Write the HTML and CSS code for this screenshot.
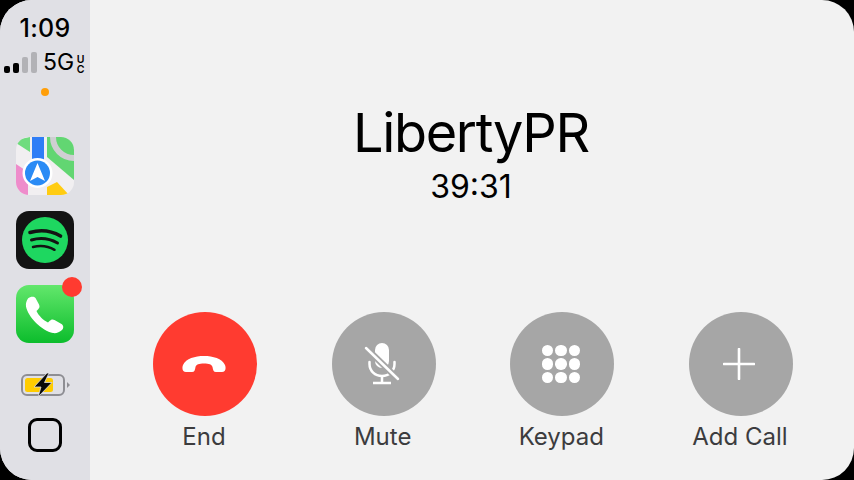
FILE: index.html
```html
<!DOCTYPE html>
<html lang="en">
<head>
    <meta charset="UTF-8">
    <meta name="viewport" content="width=device-width, initial-scale=1.0">
    <title>CarPlay Call</title>
    <link rel="stylesheet" href="styles.css">
</head>
<body>
    <div class="screen">
        <aside class="sidebar">
            <div class="clock">1:09</div>
            <div class="signal">
                <div class="bars">
                    <span class="bar bar-1"></span>
                    <span class="bar bar-2"></span>
                    <span class="bar bar-3"></span>
                    <span class="bar bar-4"></span>
                </div>
                <span class="net">5G</span>
                <span class="net-uc">UC</span>
            </div>
            <div class="mic-dot"></div>

            <div class="apps">
                <svg class="app" viewBox="0 0 58 58">
                    <defs>
                        <clipPath id="tile"><rect width="58" height="58" rx="13"/></clipPath>
                    </defs>
                    <g clip-path="url(#tile)">
                        <rect width="58" height="58" fill="#f1eff1"/>
                        <path d="M31 0H58V43L31 20Z" fill="#62d672"/>
                        <path d="M0 3L14 0V15L0 6Z" fill="#6fdc7e"/>
                        <path d="M0 27L12 35V58H0Z" fill="#ee8ccb"/>
                        <path d="M31 58V50L41 45L53 58Z" fill="#ffcc12"/>
                        <circle cx="58" cy="0" r="21" fill="none" stroke="#cfcfd2" stroke-width="6"/>
                        <rect x="16" y="0" width="12" height="26" fill="#2f7df6"/>
                        <circle cx="21.5" cy="36" r="15" fill="#fff"/>
                        <circle cx="21.5" cy="36" r="12.5" fill="#2a8bf5"/>
                        <path d="M21.5 26L29 44L21.5 40L14 44Z" fill="#fff"/>
                    </g>
                </svg>
                <svg class="app" viewBox="0 0 58 58">
                    <rect width="58" height="58" rx="13" fill="#131313"/>
                    <circle cx="29" cy="29" r="23" fill="#1ed760"/>
                    <g fill="none" stroke="#131313" stroke-linecap="round">
                        <path d="M14 21.500C24 18.500 35 19.500 44.500 25" stroke-width="3.600"/>
                        <path d="M15.500 29C24 26.500 33.500 27.500 41.500 32" stroke-width="3"/>
                        <path d="M17 36C24 34.300 32 35 38.500 38.800" stroke-width="2.500"/>
                    </g>
                </svg>
                <div class="app-badged">
                    <svg class="app" viewBox="0 0 58 58">
                        <defs>
                            <linearGradient id="phoneGreen" x1="0" y1="0" x2="0" y2="1">
                                <stop offset="0" stop-color="#63e76c"/>
                                <stop offset="1" stop-color="#0cbd2c"/>
                            </linearGradient>
                        </defs>
                        <rect width="58" height="58" rx="13" fill="url(#phoneGreen)"/>
                        <path d="M12 13.500C14 11.500 18 11 19.500 13L23 19.500C24 21.500 23.500 23 22 24.500L20.500 26C22.500 30.500 27.500 35.500 32 37.500L33.500 36C35 34.500 36.500 34 38.500 35L45.500 39C47.500 40.500 48 43 46 45C43.500 47.500 40 48.500 37 48C26 46 12 32 10 21.500C9.500 18.500 10.500 15.500 12 13.500Z" fill="#fff"/>
                    </svg>
                    <span class="badge"></span>
                </div>
            </div>

            <svg class="battery" viewBox="0 0 50 24">
                <rect x="1" y="2" width="42" height="20" rx="5" fill="none" stroke="#8e8e93" stroke-width="2"/>
                <rect x="4" y="5" width="28" height="14" rx="2.500" fill="#ffcc00"/>
                <path d="M46 9L49 12L46 15Z" fill="#8e8e93"/>
                <path d="M26 0L13 14H20L17 24L31 9.500H23.500L28 0Z" fill="#0a0a0a" stroke="#e0e0e5" stroke-width="0.800"/>
            </svg>
            <div class="home"></div>
        </aside>

        <main class="call">
            <div class="caller">
                <h1 class="caller-name">LibertyPR</h1>
                <div class="caller-time">39:31</div>
            </div>
            <div class="actions">
                <div class="action">
                    <div class="circle circle-end">
                        <svg class="ico-end" viewBox="0 0 44 16">
                            <path d="M1 9C4 2.500 13 0 22 0C31 0 40 2.500 43 9C44.500 13 43 16 40 16L34 16C31.500 16 31 14 30.500 11C30 8.500 27 7.500 22 7.500C17 7.500 14 8.500 13.500 11C13 14 12.500 16 10 16L4 16C1 16 -.5 13 1 9Z" fill="#fff"/>
                        </svg>
                    </div>
                    <span class="action-label">End</span>
                </div>
                <div class="action">
                    <div class="circle">
                        <svg class="ico-mic" viewBox="0 0 38 44">
                            <rect x="11" y="1" width="14" height="25" rx="7" fill="#fff"/>
                            <path d="M5.500 20V22C5.500 29 11 34 18 34C25 34 30.500 29 30.500 22V20" fill="none" stroke="#fff" stroke-width="2.500" stroke-linecap="round"/>
                            <path d="M18 34V41M9 41H27" fill="none" stroke="#fff" stroke-width="2.500"/>
                            <path d="M2 6L34 37" stroke="#a6a6a6" stroke-width="6.500"/>
                            <path d="M2 6L34 37" stroke="#fff" stroke-width="2.500" stroke-linecap="round"/>
                        </svg>
                    </div>
                    <span class="action-label">Mute</span>
                </div>
                <div class="action">
                    <div class="circle">
                        <div class="keypad">
                            <span></span><span></span><span></span>
                            <span></span><span></span><span></span>
                            <span></span><span></span><span></span>
                        </div>
                    </div>
                    <span class="action-label">Keypad</span>
                </div>
                <div class="action">
                    <div class="circle">
                        <svg class="ico-plus" viewBox="0 0 32 32">
                            <path d="M16 1V31M1 16H31" stroke="#fff" stroke-width="2.600" stroke-linecap="round"/>
                        </svg>
                    </div>
                    <span class="action-label">Add Call</span>
                </div>
            </div>
        </main>
    </div>
</body>
</html>
```

FILE: styles.css
```css
:root {
    --sidebar-bg: #e0e0e5;
    --main-bg: #f2f2f2;
    --button-gray: #a6a6a6;
    --button-red: #ff3b30;
    --label-color: #3c3c3e;
}

* {
    box-sizing: border-box;
}

body {
    margin: 0;
    background: #000;
    font-family: 'Inter', 'Liberation Sans', sans-serif;
    color: #000;
}

.screen {
    display: flex;
    width: 854px;
    height: 480px;
    border-radius: 32px;
    overflow: hidden;
    background: var(--main-bg);
}

/* left rail */
.sidebar {
    width: 90px;
    flex-shrink: 0;
    display: flex;
    flex-direction: column;
    align-items: center;
    padding-top: 15px;
    background: var(--sidebar-bg);
}

.clock {
    font-size: 25px;
    line-height: 26px;
    font-weight: 500;
    letter-spacing: 0.3px;
}

.signal {
    display: flex;
    align-items: flex-end;
    align-self: flex-start;
    height: 21px;
    margin-top: 11px;
    padding-left: 4px;
}

.bars {
    display: flex;
    align-items: flex-end;
    gap: 3px;
}

.bar {
    width: 6px;
    border-radius: 2px;
    background: #000;
}

.bar-1 { height: 7px; }
.bar-2 { height: 10px; }
.bar-3 { height: 16px; background: #b2b2b6; }
.bar-4 { height: 21px; background: #b2b2b6; }

.net {
    margin-left: 6px;
    font-size: 23px;
    line-height: 21px;
}

/* stacked U over C, one text run */
.net-uc {
    margin-left: 2px;
    writing-mode: vertical-rl;
    text-orientation: upright;
    font-size: 10.500px;
    line-height: 9px;
    letter-spacing: -3px;
    font-weight: 600;
}

.mic-dot {
    width: 8px;
    height: 8px;
    margin-top: 15px;
    border-radius: 50%;
    background: #ff9f0a;
}

.apps {
    display: flex;
    flex-direction: column;
    gap: 16px;
    margin-top: 41px;
}

.app {
    display: block;
    width: 58px;
    height: 58px;
}

.app-badged {
    position: relative;
}

.badge {
    position: absolute;
    top: -8px;
    right: -8px;
    width: 20px;
    height: 20px;
    border-radius: 50%;
    background: #ff3b30;
}

.battery {
    width: 50px;
    height: 24px;
    margin-top: 30px;
    margin-left: 1px;
}

.home {
    width: 34px;
    height: 34px;
    margin-top: 21px;
    border: 3px solid #000;
    border-radius: 9px;
}

/* call area */
.call {
    flex: 1;
    display: flex;
    flex-direction: column;
}

.caller {
    display: flex;
    flex-direction: column;
    align-items: center;
    padding: 100px 2px 0 0;
}

.caller-name {
    margin: 0;
    font-size: 54px;
    line-height: 66px;
    font-weight: 400;
    letter-spacing: -1.35px;
}

.caller-time {
    margin-top: 3px;
    font-size: 32px;
    line-height: 36px;
}

.actions {
    display: flex;
    justify-content: space-between;
    margin-top: auto;
    padding: 0 61px 29px 63px;
}

.action {
    display: flex;
    flex-direction: column;
    align-items: center;
    width: 104px;
}

.circle {
    display: flex;
    align-items: center;
    justify-content: center;
    width: 104px;
    height: 104px;
    border-radius: 50%;
    background: var(--button-gray);
}

.circle-end {
    background: var(--button-red);
}

.action-label {
    margin-top: 6px;
    margin-right: 2px;
    font-size: 24px;
    line-height: 29px;
    color: var(--label-color);
    white-space: nowrap;
}

.ico-end {
    width: 44px;
    height: 16px;
    margin-right: 2px;
}

.ico-mic {
    width: 38px;
    height: 44px;
    margin-right: 2px;
}

.ico-plus {
    width: 32px;
    height: 32px;
    margin-right: 3px;
}

.keypad {
    display: grid;
    grid-template-columns: repeat(3, 11.500px);
    grid-auto-rows: 11.500px;
    gap: 2px;
    margin-right: 3px;
}

.keypad span {
    border-radius: 50%;
    background: #fff;
}
```
